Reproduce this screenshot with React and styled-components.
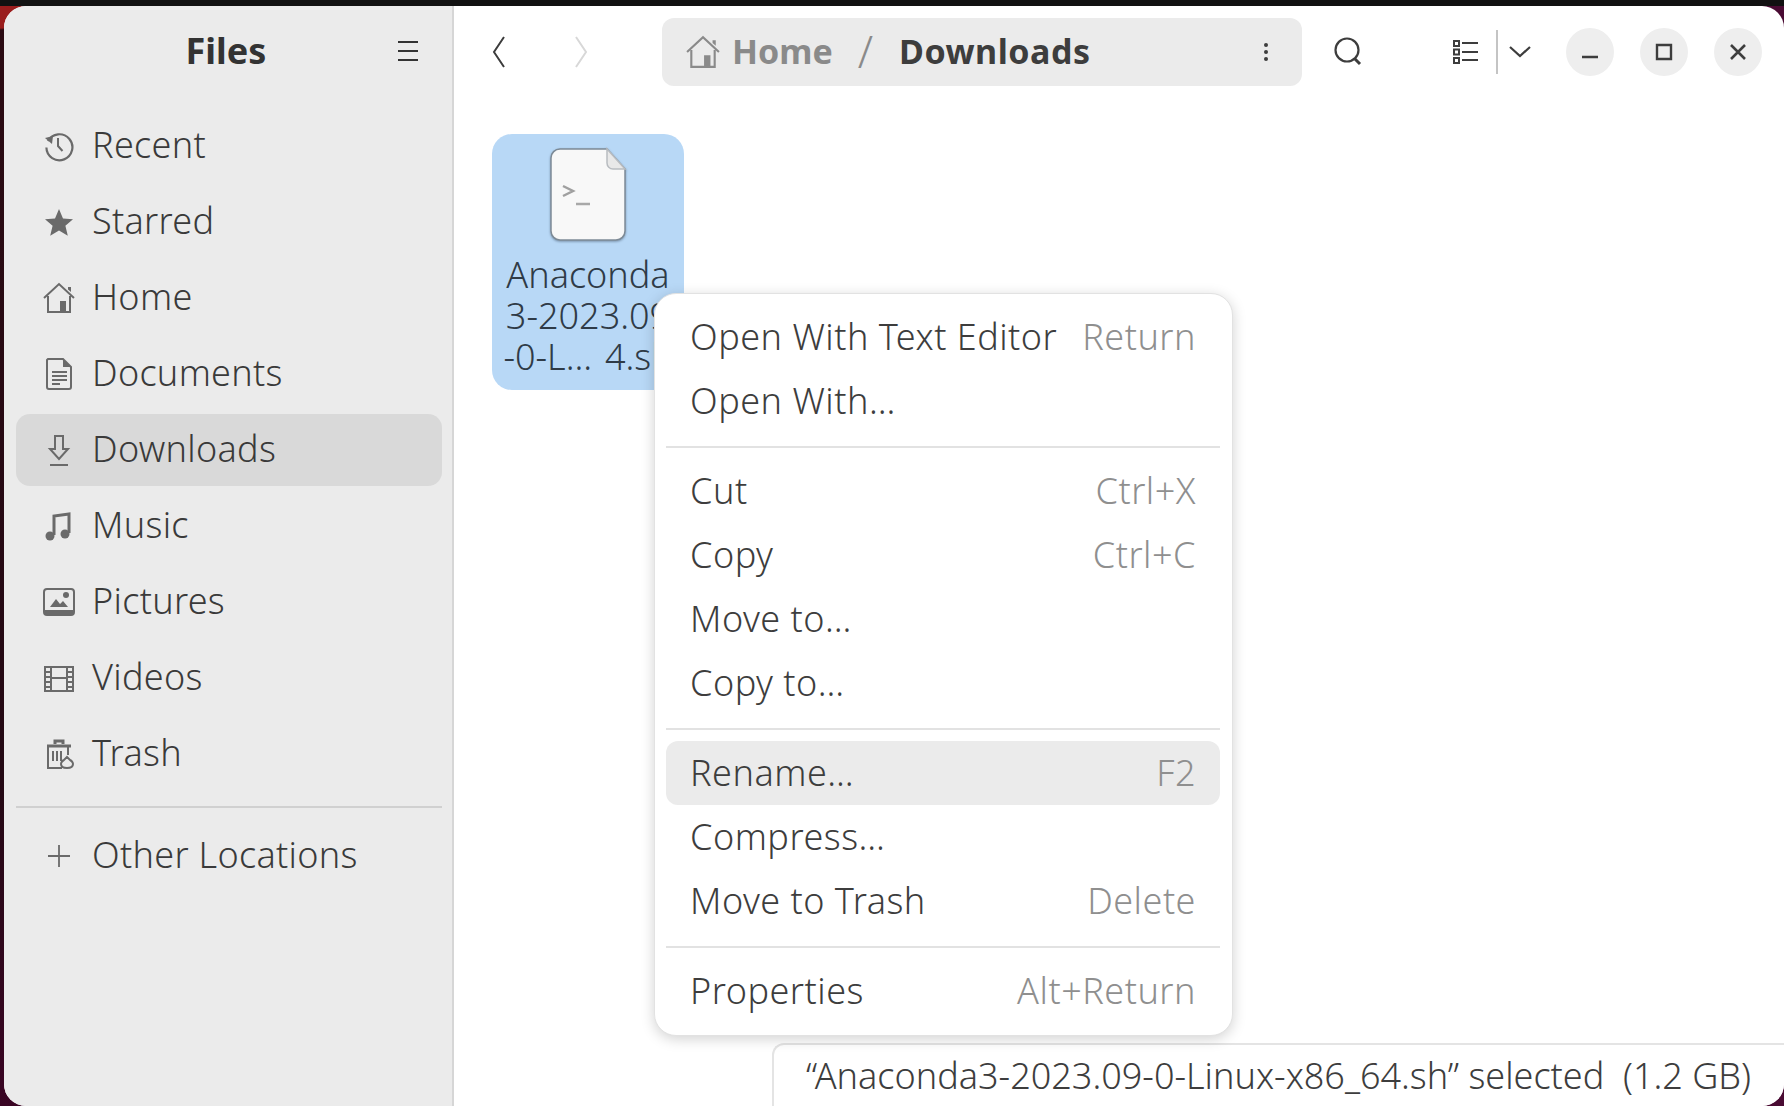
import React from "react";
import styled, { createGlobalStyle } from "styled-components";

const Global = createGlobalStyle`
    html, body {
        margin: 0;
        padding: 0;
        background: #111;
    }
    body {
        font-family: "Noto Sans", "Open Sans", sans-serif;
        color: #3d3d3d;
    }
`

const Screen = styled.div`
    width: 1784px;
    height: 1106px;
    overflow: hidden;
    display: flex;
    flex-direction: column;
`
const TopBar = styled.div`
    height: 6px;
    flex: none;
    background: #111;
`
const Desktop = styled.div`
    flex: 1;
    display: flex;
    padding-left: 4px;
    background:
        radial-gradient(circle at 0 0, #9a1c1c 0, #9a1c1c 22px, transparent 24px),
        radial-gradient(circle at 100% 0, #4a0b33 0, #4a0b33 22px, transparent 24px),
        radial-gradient(circle at 100% 100%, #4a0b33 0, #4a0b33 22px, transparent 24px),
        linear-gradient(180deg, #2b0a12 0%, #240914 70%, #3a0524 100%);
`
const Window = styled.div`
    position: relative;
    flex: 1;
    display: flex;
    border-radius: 22px;
    overflow: hidden;
    background: #fff;
`
const Sidebar = styled.aside`
    width: 426px;
    flex: none;
    background: #ebebeb;
    border-right: 2px solid #d6d6d6;
    display: flex;
    flex-direction: column;
    padding: 0 10px 0 12px;
`
const SidebarHead = styled.div`
    height: 90px;
    flex: none;
    display: flex;
    align-items: center;
    justify-content: center;
    position: relative;
    margin-bottom: 14px;
`
const Title = styled.div`
    font-size: 36px;
    font-weight: 700;
    color: #333;
    margin: -1px 6px 0 0;
`
const MenuBtn = styled.div`
    position: absolute;
    right: 22px;
    top: 33px;
    width: 24px;
    height: 24px;
    color: #333;
`
const PlaceList = styled.div`
    display: flex;
    flex-direction: column;
    gap: 4px;
`
const Place = styled.div`
    height: 72px;
    display: flex;
    align-items: center;
    gap: 17px;
    padding-left: 27px;
    border-radius: 14px;
    font-size: 36px;
    font-weight: 300;
    letter-spacing: 0.3px;
    color: #3a3a3a;
    background: ${p => (p.$active ? "#d9d9d9" : "transparent")};
`
const PlaceLabel = styled.span`
    margin-top: -3px;
`
const PlaceIcon = styled.svg`
    width: 32px;
    height: 32px;
    flex: none;
    color: #6a6a6a;
`
const SideRule = styled.div`
    height: 2px;
    background: #d0d0d0;
    margin: 16px 0 12px;
`
const Main = styled.main`
    flex: 1;
    display: flex;
    flex-direction: column;
    min-width: 0;
`
const Toolbar = styled.div`
    height: 92px;
    flex: none;
    display: flex;
    align-items: center;
    padding-left: 22px;
`
const ToolIcon = styled.svg`
    width: ${p => p.$size || 46}px;
    height: ${p => p.$size || 46}px;
    flex: none;
    color: ${p => p.$dim ? "#d8d8d8" : "#3d3d3d"};
    margin-left: ${p => p.$gap || 0}px;
`
const PathBar = styled.div`
    width: 640px;
    height: 68px;
    flex: none;
    margin-left: 58px;
    border-radius: 12px;
    background: #ebebeb;
    display: flex;
    align-items: center;
    padding-left: 24px;
    box-sizing: border-box;
    position: relative;
    font-size: 34px;
    font-weight: 700;
`
const Crumb = styled.span`
    color: ${p => p.$current ? "#3d3d3d" : "#8a8a8a"};
    letter-spacing: ${p => p.$current ? "0.5px" : "0"};
    margin-top: -3px;
`
const Slash = styled.span`
    color: #8a8a8a;
    font-size: 44px;
    font-weight: 300;
    line-height: 1;
    margin: -3px 26px 0 25px;
`
const HomeGlyph = styled.svg`
    width: 34px;
    height: 34px;
    color: #8a8a8a;
    margin-right: 12px;
`
const Dots = styled.svg`
    position: absolute;
    right: 24px;
    top: 22px;
    width: 24px;
    height: 24px;
    color: #3d3d3d;
`
const ToolRule = styled.div`
    width: 2px;
    height: 44px;
    flex: none;
    margin-left: 8px;
    background: #c4c4c4;
`
const WinButtons = styled.div`
    display: flex;
    gap: 26px;
    margin-left: 28px;
`
const WinBtn = styled.div`
    width: 48px;
    height: 48px;
    border-radius: 50%;
    background: #eeeeee;
    display: flex;
    align-items: center;
    justify-content: center;
    color: #3d3d3d;
`
const Content = styled.div`
    flex: 1;
    padding: 36px 0 0 38px;
`
const FileTile = styled.div`
    width: 192px;
    height: 256px;
    border-radius: 20px;
    background: #b8d8f6;
    display: flex;
    flex-direction: column;
    align-items: center;
    padding-top: 13px;
    box-sizing: border-box;
`
const FileIcon = styled.svg`
    width: 80px;
    height: 94px;
    flex: none;
    filter: drop-shadow(0 1px 1px rgba(60, 80, 100, 0.5));
`
const FileName = styled.div`
    margin-top: 13px;
    font-size: 36px;
    font-weight: 300;
    line-height: 41px;
    color: #2f3b47;
    text-align: center;
    white-space: nowrap;
`
const Menu = styled.div`
    position: absolute;
    left: 650px;
    top: 287px;
    width: 579px;
    height: 743px;
    box-sizing: border-box;
    padding: 11px 12px 13px 11px;
    background: #fff;
    border-radius: 22px;
    border: 1px solid #e2e2e2;
    box-shadow: 0 3px 14px rgba(0, 0, 0, 0.18);
`
const MenuRow = styled.div`
    height: 64px;
    box-sizing: border-box;
    display: flex;
    align-items: center;
    justify-content: space-between;
    padding: 0 24px 2px;
    border-radius: 12px;
    font-size: 36px;
    font-weight: 300;
    letter-spacing: 0.5px;
    color: #3d3d3d;
    background: ${p => (p.$hover ? "#ebebeb" : "transparent")};
`
const Accel = styled.span`
    color: #8f8f8f;
`
const MenuRule = styled.div`
    height: 2px;
    background: #e2e2e2;
    margin: 13px 0 11px;
`
const Status = styled.div`
    position: absolute;
    right: 0;
    bottom: 0;
    left: 768px;
    height: 63px;
    box-sizing: border-box;
    background: #fff;
    border: 2px solid #e4e4e4;
    border-right: 0;
    border-bottom: 0;
    border-top-left-radius: 12px;
    padding: 0 0 1px 32px;
    display: flex;
    align-items: center;
    font-size: 36px;
    font-weight: 300;
    color: #3d3d3d;
    white-space: pre;
`

const icons = {
    recent: <>
        <path d="M5 11a13 13 0 1 1-1.6 6.5" fill="none" stroke="currentColor" strokeWidth="2.2" />
        <path d="M2 8l8-2-1 8z" fill="currentColor" />
        <path d="M15 8v8l4.500 5" fill="none" stroke="currentColor" strokeWidth="2" />
    </>,
    star: <path d="M16 3l4 9.500 10 .8-7.600 6.500 2.400 10L16 24.500 7.200 29.800l2.400-10L2 13.300l10-.8z" fill="currentColor" />,
    home: <>
        <path d="M1 16L16 2l15 14" fill="none" stroke="currentColor" strokeWidth="2" />
        <path d="M5 14v16h22V14" fill="none" stroke="currentColor" strokeWidth="2" />
        <path d="M17 19h6v11h-6z" fill="currentColor" />
        <path d="M25 5h3v5l-3-2.500z" fill="currentColor" />
    </>,
    doc: <>
        <path d="M5 1h15l8 8v20a2 2 0 0 1-2 2H6a2 2 0 0 1-2-2V2z" fill="none" stroke="currentColor" strokeWidth="2" />
        <path d="M20 1v8h8z" fill="currentColor" />
        <path d="M9 14h15M9 18h15M9 22h15M9 26h8" stroke="currentColor" strokeWidth="2" />
    </>,
    download: <>
        <path d="M12 2h8v13h5L16 25 7 15h5z" fill="none" stroke="currentColor" strokeWidth="2" />
        <path d="M7 31h18" stroke="currentColor" strokeWidth="2" />
    </>,
    music: <>
        <path d="M11 25V6l15-2v19" fill="none" stroke="currentColor" strokeWidth="3" />
        <circle cx="7" cy="26" r="4.500" fill="currentColor" />
        <circle cx="22" cy="24" r="4.500" fill="currentColor" />
    </>,
    picture: <>
        <rect x="1" y="3" width="30" height="26" rx="3" fill="none" stroke="currentColor" strokeWidth="2" />
        <path d="M1 24h30v3a2 2 0 0 1-2 2H3a2 2 0 0 1-2-2z" fill="currentColor" />
        <path d="M7 21l6-8 4 5 3-3 5 6z" fill="currentColor" />
        <circle cx="23" cy="9" r="3" fill="currentColor" />
    </>,
    video: <>
        <path d="M2 5h28v24H2z" fill="none" stroke="currentColor" strokeWidth="2" />
        <path d="M8 5v24M24 5v24M8 16h16" stroke="currentColor" strokeWidth="2" />
        <path d="M2 10h6M2 15h6M2 20h6M2 25h6M24 10h6M24 15h6M24 20h6M24 25h6" stroke="currentColor" strokeWidth="2" />
    </>,
    trash: <>
        <path d="M4 8h24M12 6V3h8v3" fill="none" stroke="currentColor" strokeWidth="3" />
        <path d="M5 9v21h14M25 9v8" fill="none" stroke="currentColor" strokeWidth="2" />
        <path d="M10 13v10M14 13v10M18 13v10" stroke="currentColor" strokeWidth="2" />
        <path d="M24 19l3 3a5 5 0 0 1 3 4c0 3-2 4-6 4s-6-1-6-4a5 5 0 0 1 3-4z" fill="none" stroke="currentColor" strokeWidth="2" />
    </>,
    plus: <path d="M16 5v22M5 16h22" stroke="currentColor" strokeWidth="1.800" />,
}

const places = [
    ["Recent", "recent"],
    ["Starred", "star"],
    ["Home", "home"],
    ["Documents", "doc"],
    ["Downloads", "download"],
    ["Music", "music"],
    ["Pictures", "picture"],
    ["Videos", "video"],
    ["Trash", "trash"],
]

const menuGroups = [
    [["Open With Text Editor", "Return"], ["Open With…"]],
    [["Cut", "Ctrl+X"], ["Copy", "Ctrl+C"], ["Move to…"], ["Copy to…"]],
    [["Rename…", "F2", true], ["Compress…"], ["Move to Trash", "Delete"]],
    [["Properties", "Alt+Return"]],
]

const App = () => {
    return (
        <Screen>
            <Global />
            <TopBar />
            <Desktop>
                <Window>
                    <Sidebar>
                        <SidebarHead>
                            <Title>Files</Title>
                            <MenuBtn>
                                <svg width="24" height="24" viewBox="0 0 24 24">
                                    <path d="M2 3h20M2 12h20M2 21h20" stroke="currentColor" strokeWidth="2" />
                                </svg>
                            </MenuBtn>
                        </SidebarHead>
                        <PlaceList>
                            {places.map(([name, icon]) => (
                                <Place key={name} $active={name === "Downloads"}>
                                    <PlaceIcon viewBox="0 0 32 32">{icons[icon]}</PlaceIcon>
                                    <PlaceLabel>{name}</PlaceLabel>
                                </Place>
                            ))}
                        </PlaceList>
                        <SideRule />
                        <Place>
                            <PlaceIcon viewBox="0 0 32 32">{icons.plus}</PlaceIcon>
                            <PlaceLabel>Other Locations</PlaceLabel>
                        </Place>
                    </Sidebar>
                    <Main>
                        <Toolbar>
                            <ToolIcon viewBox="0 0 46 46">
                                <path d="M28 8L18 23l10 15" fill="none" stroke="currentColor" strokeWidth="2" />
                            </ToolIcon>
                            <ToolIcon $dim $gap={36} viewBox="0 0 46 46">
                                <path d="M18 8l10 15-10 15" fill="none" stroke="currentColor" strokeWidth="2" />
                            </ToolIcon>
                            <PathBar>
                                <HomeGlyph viewBox="0 0 32 32">{icons.home}</HomeGlyph>
                                <Crumb>Home</Crumb>
                                <Slash>/</Slash>
                                <Crumb $current>Downloads</Crumb>
                                <Dots viewBox="0 0 24 24">
                                    <circle cx="12" cy="5" r="2" fill="currentColor" />
                                    <circle cx="12" cy="12" r="2" fill="currentColor" />
                                    <circle cx="12" cy="19" r="2" fill="currentColor" />
                                </Dots>
                            </PathBar>
                            <ToolIcon $gap={23} viewBox="0 0 46 46">
                                <circle cx="22" cy="21" r="11.500" fill="none" stroke="currentColor" strokeWidth="2.200" />
                                <path d="M30 30l5 5" stroke="currentColor" strokeWidth="3" />
                            </ToolIcon>
                            <ToolIcon $gap={71} viewBox="0 0 46 46">
                                <path d="M12 12h5v5h-5zM12 20.500h5v5h-5zM12 29h5v5h-5z" fill="none" stroke="currentColor" strokeWidth="2" />
                                <path d="M20 14h16M20 23h16M20 31h16" stroke="currentColor" strokeWidth="2.200" />
                            </ToolIcon>
                            <ToolRule />
                            <ToolIcon $size={36} $gap={4} viewBox="0 0 36 36">
                                <path d="M8 13l10 9 10-9" fill="none" stroke="currentColor" strokeWidth="2.200" />
                            </ToolIcon>
                            <WinButtons>
                                <WinBtn>
                                    <svg width="24" height="24" viewBox="0 0 24 24">
                                        <path d="M4 17h16" stroke="currentColor" strokeWidth="2.400" />
                                    </svg>
                                </WinBtn>
                                <WinBtn>
                                    <svg width="24" height="24" viewBox="0 0 24 24">
                                        <path d="M5 5h14v14H5z" fill="none" stroke="currentColor" strokeWidth="2.400" />
                                    </svg>
                                </WinBtn>
                                <WinBtn>
                                    <svg width="24" height="24" viewBox="0 0 24 24">
                                        <path d="M5 5l14 14M19 5L5 19" stroke="currentColor" strokeWidth="2.600" />
                                    </svg>
                                </WinBtn>
                            </WinButtons>
                        </Toolbar>
                        <Content>
                            <FileTile>
                                <FileIcon viewBox="0 0 80 94">
                                    <path d="M12 2h47l18 20v62a9 9 0 0 1-9 9H12a9 9 0 0 1-9-9V11a9 9 0 0 1 9-9z" fill="#f8f8f8" stroke="#7d8a96" strokeWidth="1.500" />
                                    <path d="M59 2v14a6 6 0 0 0 6 6h12z" fill="#e8e8e8" stroke="#b8bcc0" strokeWidth="1.500" />
                                    <path d="M15 39l10 5-10 5" fill="none" stroke="#a0a0a0" strokeWidth="2.500" />
                                    <path d="M28 57h14" stroke="#a8a8a8" strokeWidth="2.500" />
                                </FileIcon>
                                <FileName>
                                    Anaconda<br />3-2023.09<br />-0-L…&#8202; 4.sh
                                </FileName>
                            </FileTile>
                        </Content>
                    </Main>
                    <Status>“Anaconda3-2023.09-0-Linux-x86_64.sh” selected  (1.2 GB)</Status>
                    <Menu>
                        {menuGroups.map((group, i) => (
                            <React.Fragment key={i}>
                                {i > 0 && <MenuRule />}
                                {group.map(([label, accel, hover]) => (
                                    <MenuRow key={label} $hover={hover}>
                                        <span>{label}</span>
                                        {accel && <Accel>{accel}</Accel>}
                                    </MenuRow>
                                ))}
                            </React.Fragment>
                        ))}
                    </Menu>
                </Window>
            </Desktop>
        </Screen>
    )
}

export default App;
